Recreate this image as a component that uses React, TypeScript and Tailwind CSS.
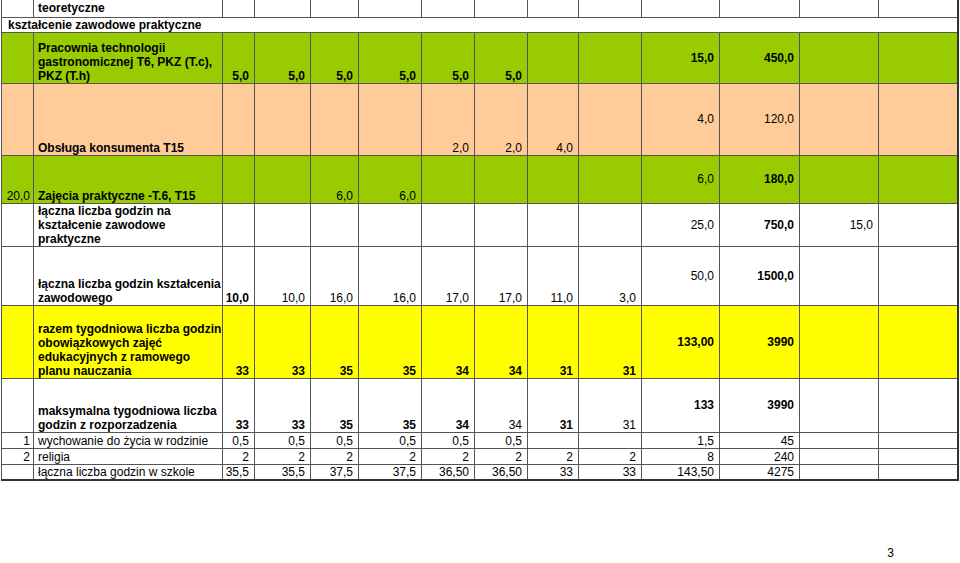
import React from "react";

type Cell = { t?: string; b?: boolean; mid?: boolean };
type Row = { h: string; bg: string; cells: Cell[] };

const e: Cell = {};
const n = (t: string, b = false): Cell => ({ t, b });
const m = (t: string, b = false): Cell => ({ t, b, mid: true });

// column widths taken from the sheet grid
const cols = [32, 189, 32, 56, 48, 63, 53, 53, 51, 63, 78, 80, 79, 79];

const rows: Row[] = [
  {
    h: "h-[51px]",
    bg: "bg-[#99cc00]",
    cells: [
      e,
      n("Pracownia technologii\ngastronomicznej T6, PKZ (T.c),\nPKZ (T.h)", true),
      n("5,0", true),
      n("5,0", true),
      n("5,0", true),
      n("5,0", true),
      n("5,0", true),
      n("5,0", true),
      e,
      e,
      m("15,0", true),
      m("450,0", true),
      e,
      e,
    ],
  },
  {
    h: "h-[72px]",
    bg: "bg-[#ffcc99]",
    cells: [e, n("Obsługa konsumenta T15", true), e, e, e, e, n("2,0"), n("2,0"), n("4,0"), e, m("4,0"), m("120,0"), e, e],
  },
  {
    h: "h-[48px]",
    bg: "bg-[#99cc00]",
    cells: [n("20,0"), n("Zajęcia praktyczne -T.6, T15", true), e, e, n("6,0"), n("6,0"), e, e, e, e, m("6,0"), m("180,0", true), e, e],
  },
  {
    h: "h-[41px]",
    bg: "bg-white",
    cells: [e, n("łączna liczba godzin na\nkształcenie zawodowe\npraktyczne", true), e, e, e, e, e, e, e, e, m("25,0"), m("750,0", true), m("15,0"), e],
  },
  {
    h: "h-[59px]",
    bg: "bg-white",
    cells: [
      e,
      n("łączna liczba godzin kształcenia\nzawodowego", true),
      n("10,0", true),
      n("10,0"),
      n("16,0"),
      n("16,0"),
      n("17,0"),
      n("17,0"),
      n("11,0"),
      n("3,0"),
      m("50,0"),
      m("1500,0", true),
      e,
      e,
    ],
  },
  {
    h: "h-[73px]",
    bg: "bg-[#ffff00]",
    cells: [
      e,
      n("razem tygodniowa liczba godzin\nobowiązkowych zajęć\nedukacyjnych z ramowego\nplanu nauczania", true),
      n("33", true),
      n("33", true),
      n("35", true),
      n("35", true),
      n("34", true),
      n("34", true),
      n("31", true),
      n("31", true),
      m("133,00", true),
      m("3990", true),
      e,
      e,
    ],
  },
  {
    h: "h-[54px]",
    bg: "bg-white",
    cells: [
      e,
      n("maksymalna tygodniowa liczba\ngodzin z rozporzadzenia", true),
      n("33", true),
      n("33", true),
      n("35", true),
      n("35", true),
      n("34", true),
      n("34"),
      n("31", true),
      n("31"),
      m("133", true),
      m("3990", true),
      e,
      e,
    ],
  },
  {
    h: "h-[16px]",
    bg: "bg-white",
    cells: [n("1"), n("wychowanie do życia w rodzinie"), n("0,5"), n("0,5"), n("0,5"), n("0,5"), n("0,5"), n("0,5"), e, e, n("1,5"), n("45"), e, e],
  },
  {
    h: "h-[16px]",
    bg: "bg-white",
    cells: [n("2"), n("religia"), n("2"), n("2"), n("2"), n("2"), n("2"), n("2"), n("2"), n("2"), n("8"), n("240"), e, e],
  },
  {
    h: "h-[16px]",
    bg: "bg-white",
    cells: [
      e,
      n("łączna liczba godzin w szkole"),
      n("35,5"),
      n("35,5"),
      n("37,5"),
      n("37,5"),
      n("36,50"),
      n("36,50"),
      n("33"),
      n("33"),
      n("143,50"),
      n("4275"),
      e,
      e,
    ],
  },
];

function Td({ c, i, last }: { c: Cell; i: number; last: boolean }) {
  return (
    <td
      className={`border border-[#555] p-0 whitespace-pre ${c.mid ? "align-middle" : "align-bottom"} ${
        c.b ? "font-bold" : "font-normal"
      } ${i === 1 ? "text-left pl-[4px]" : i === 0 ? "text-right pr-[3px]" : "text-right pr-[5px]"} ${
        i === 13 ? "border-r-2 border-r-[#333]" : ""
      } ${last ? "border-b-2 border-b-[#333]" : ""}`}
    >
      {c.t}
    </td>
  );
}

export default function App() {
  return (
    <div className="w-[960px] h-[563px] bg-white overflow-hidden font-['Liberation_Sans',Arial,sans-serif] text-black">
      <table className="ml-[1px] w-[956px] table-fixed border-collapse text-[12px] leading-[14px]">
        <colgroup>
          {cols.map((w, i) => (
            <col key={i} style={{ width: w }} />
          ))}
        </colgroup>
        <tbody>
          <tr className="h-[17px] bg-white">
            {cols.map((_, i) => (
              <td
                key={i}
                className={`border border-t-0 border-[#555] p-0 pb-[2px] align-bottom text-left ${
                  i === 1 ? "font-bold pl-[4px]" : ""
                } ${i === 13 ? "border-r-2 border-r-[#333]" : ""}`}
              >
                {i === 1 ? "teoretyczne" : ""}
              </td>
            ))}
          </tr>
          <tr className="h-[15px] bg-white">
            <td colSpan={14} className="border border-[#555] border-r-2 border-r-[#333] p-0 pl-[6px] align-bottom font-bold text-left">
              kształcenie zawodowe praktyczne
            </td>
          </tr>
          {rows.map((r, ri) => (
            <tr key={ri} className={`${r.h} ${r.bg}`}>
              {r.cells.map((c, i) => (
                <Td key={i} c={c} i={i} last={ri === rows.length - 1} />
              ))}
            </tr>
          ))}
        </tbody>
      </table>
      <div className="flex justify-end pr-[66px] pt-[65px] text-[12px] leading-[14px]">3</div>
    </div>
  );
}
